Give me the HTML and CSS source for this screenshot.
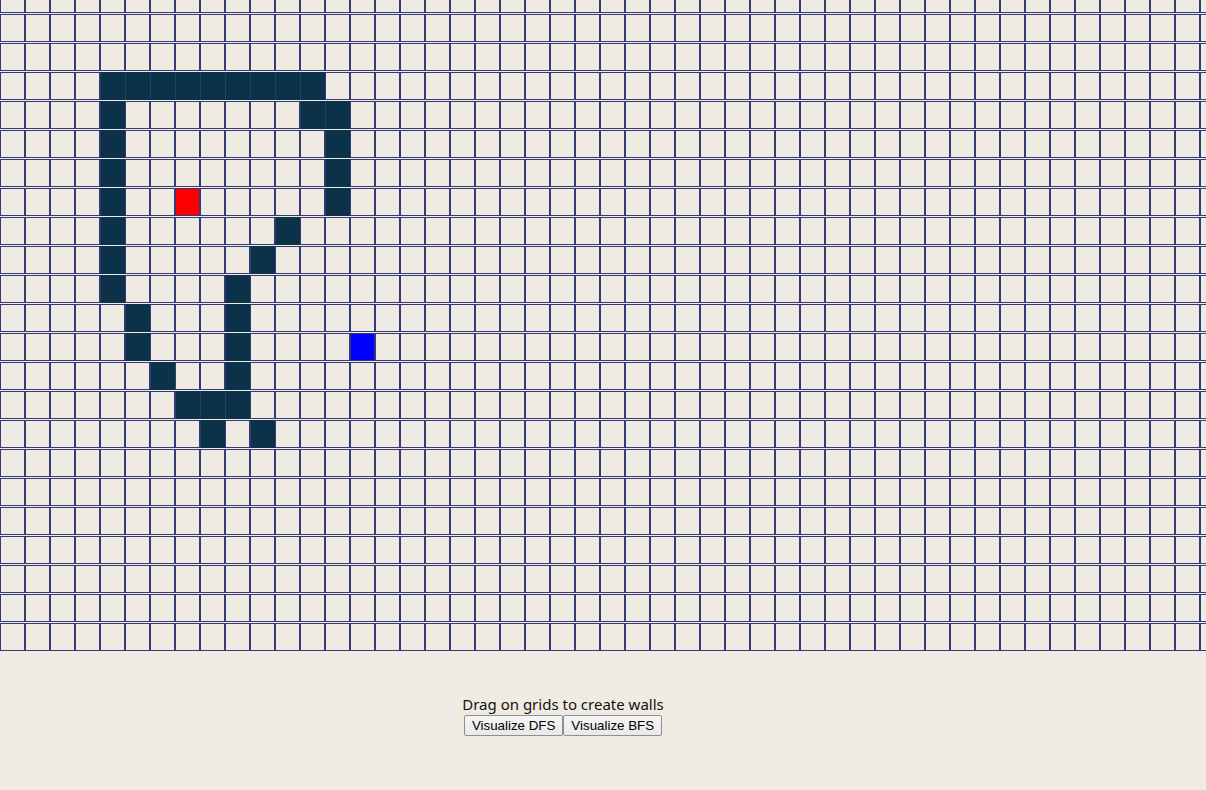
FILE: index.html
```html
<!DOCTYPE html>
<html>
<head>
<meta charset="utf-8">
<link rel="stylesheet" href="styles.css">
</head>
<body>
<div class="grid" id="grid"></div>
<div class="controls">
  <div class="hint">Drag on grids to create walls</div>
  <div class="buttons">
    <button class="btn">Visualize DFS</button><button class="btn">Visualize BFS</button>
  </div>
</div>
<script src="script.js"></script>
</body>
</html>
```
FILE: styles.css
```css
html, body {
  margin: 0;
  padding: 0;
  background: #f0ebe2;
  overflow: hidden;
}
.grid {
  margin-top: -15px;
  width: 1206px;
  overflow: hidden;
}
.row {
  display: flex;
  margin-bottom: 1px;
}
.cell {
  flex: 0 0 25px;
  width: 25px;
  height: 28px;
  box-sizing: border-box;
  border: 1px solid #363a78;
  background: #f0ebe2;
}
.cell.wall {
  background: #0c3249;
  border-color: #0c3249;
  border-left-color: #2b3a66;
}
.cell.start {
  background: #ff0000;
}
.cell.end {
  background: #0000ff;
}
.controls {
  width: 1126px;
  margin-top: 42px;
  text-align: center;
  font-family: "Noto Sans", "Open Sans", sans-serif;
  color: #111;
}
.hint {
  font-size: 15px;
  line-height: 21px;
}
.buttons {
  display: flex;
  justify-content: center;
}
.btn {
  font-family: "Liberation Sans", Arial, sans-serif;
  font-size: 13.33px;
  height: 21px;
  padding: 0 7px;
  margin: 0;
  border: 1px solid #8f8f8f;
  border-radius: 2px;
  background: linear-gradient(#f6f6f6, #e9e9e9);
  color: #000;
}
```
FILE: script.js
```js
(function () {
  var rows = 23, cols = 50;
  var walls = {
    3: [4,5,6,7,8,9,10,11,12],
    4: [4,12,13],
    5: [4,13],
    6: [4,13],
    7: [4,13],
    8: [4,11],
    9: [4,10],
    10: [4,9],
    11: [5,9],
    12: [5,9],
    13: [6,9],
    14: [7,8,9],
    15: [8,10]
  };
  var grid = document.getElementById('grid');
  for (var r = 0; r < rows; r++) {
    var row = document.createElement('div');
    row.className = 'row';
    for (var c = 0; c < cols; c++) {
      var cell = document.createElement('div');
      cell.className = 'cell';
      if (walls[r] && walls[r].indexOf(c) !== -1) cell.className += ' wall';
      if (r === 7 && c === 7) cell.className += ' start';
      if (r === 12 && c === 14) cell.className += ' end';
      row.appendChild(cell);
    }
    grid.appendChild(row);
  }
})();
```
